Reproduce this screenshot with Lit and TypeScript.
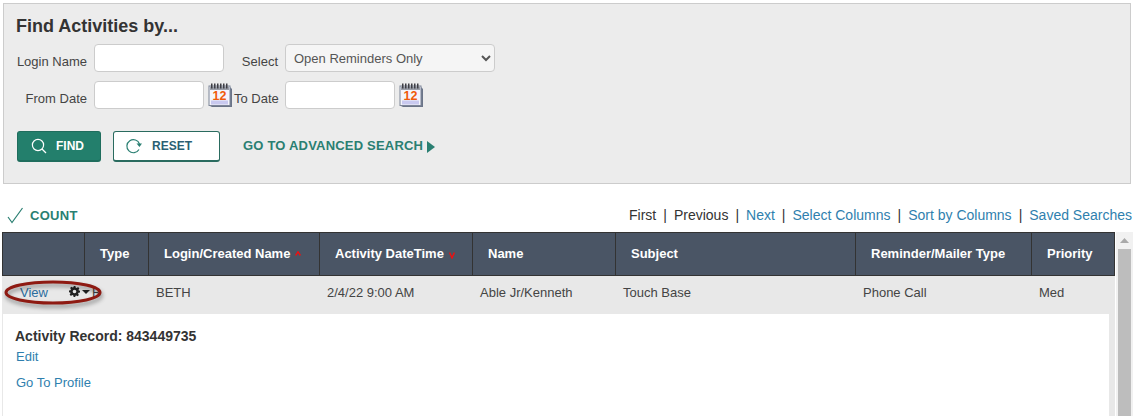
import { LitElement, html, css, svg } from "lit";
import { customElement } from "lit/decorators.js";

const calendar = html`<svg class="cal" width="24" height="24" viewBox="0 0 24 24">
  <path d="M3 4 H22 L24 6 V24 H4 L2 23 Z" fill="#6b7488"/>
  <rect x="1" y="3" width="21" height="19.5" fill="#f4f4fb" stroke="#7d8598"/>
  <rect x="2" y="3.5" width="19" height="3.5" fill="#9a9ea8"/>
  ${[3, 6, 9, 12, 15, 18].map((x) => svg`<rect x="${x}" y="0.5" width="1.5" height="5" fill="#3e3e44"/>`)}
  <rect x="3" y="17.5" width="17" height="4" fill="#c9c9ef"/>
  <text x="11.5" y="17" text-anchor="middle" font-family="Liberation Sans" font-weight="700" font-size="12.5" fill="#f05a0a">12</text>
</svg>`;

const cols = [82, 64, 171, 153, 143, 240, 176, 84];

@customElement("app-root")
export class AppRoot extends LitElement {
  static styles = css`
    :host { display: block; width: 1134px; height: 416px; overflow: hidden; background: #fff;
      font-family: "Liberation Sans", Arial, sans-serif; font-size: 13px; color: #333; }
    * { box-sizing: border-box; }
    a { color: #2f7fae; text-decoration: none; cursor: pointer; }
    .page { padding: 3px 3px 0 3px; }
    .panel { width: 1128px; height: 181px; background: #ececec; border: 1px solid #ccc; padding: 11px 12px 0; }
    h1 { margin: 0; font-size: 18px; line-height: 22px; font-weight: 700; color: #333; }
    .row { display: flex; align-items: center; height: 28px; gap: 7px; }
    .row1 { margin-top: 7px; }
    .row2 { margin-top: 9px; }
    label { display: block; text-align: right; padding-top: 6px; flex: none; color: #444; white-space: nowrap; }
    .l1 { width: 71px; }
    .l2 { width: 40px; margin-left: 7px; }
    .l3 { width: 44px; margin-left: -5px; }
    input { height: 28px; border: 1px solid #ccc; border-radius: 4px; background: #fff; padding: 0 8px; flex: none; outline: none; }
    .w130 { width: 130px; }
    .w110 { width: 110px; }
    select { width: 210px; height: 28px; flex: none; border: 1px solid #ccc; border-radius: 4px; background: #f5f5f5;
      color: #555; font: 13px "Liberation Sans", Arial, sans-serif; padding: 0 4px; }
    .dated { display: flex; align-items: center; gap: 4px; flex: none; }
    .cal { display: block; flex: none; }
    .actions { display: flex; align-items: center; margin-top: 22px; margin-left: 1px; }
    .btn { height: 31px; border-radius: 3px; display: flex; align-items: center; font-size: 12px; font-weight: 700; flex: none; }
    .find { width: 84px; background: #237f6c; border: 1px solid #1f6d5d; border-bottom-width: 2px; color: #fff; padding-left: 13px; gap: 9px; }
    .reset { width: 107px; background: #fff; border: 1px solid #2a6b5f; border-bottom-width: 2px; color: #2b5f73; margin-left: 12px; padding-left: 12px; gap: 9px; }
    .adv { margin-left: 23px; display: flex; align-items: center; gap: 4px; color: #2a7f72; font-size: 13px; font-weight: 700; letter-spacing: 0.2px; margin-top: -3px; }
    .adv svg { margin-top: 3px; }
    .bar { display: flex; align-items: center; justify-content: space-between; height: 22px; margin-top: 20px; margin-left: 4px; margin-right: -1px; }
    .count { display: flex; align-items: center; gap: 6px; color: #2a7f72; font-size: 13px; font-weight: 700; letter-spacing: 0.3px; }
    .pager { display: flex; gap: 7px; color: #333; font-size: 14px; }
    .grid { display: flex; margin-top: 6px; margin-left: -1px; }
    .main { width: 1113px; flex: none; position: relative; }
    table { border-collapse: separate; border-spacing: 0; table-layout: fixed; width: 1113px; }
    th { background: #4a5565; color: #fff; font-size: 13px; font-weight: 700; text-align: left; height: 44px; padding: 0 0 2px 15px;
      border-top: 1px solid #333; border-bottom: 1px solid #333; border-left: 1px solid #333; white-space: nowrap; }
    th:last-child { border-right: 1px solid #333; }
    td { background: #e8e8e8; height: 38px; padding: 0 0 6px 8px; white-space: nowrap; color: #444; }
    td.act { padding-left: 18px; position: relative; }
    td.act a { color: #2b6d9e; }
    .sort { display: inline-block; margin-left: 1px; vertical-align: 2px; }
    .gear { position: absolute; left: 67px; top: 10px; display: flex; align-items: center; gap: 2px; }
    .ellipse { position: absolute; left: 2px; top: 48px; width: 98px; height: 26px; pointer-events: none; overflow: visible; filter: drop-shadow(1px 3px 2px rgba(0,0,0,.4)); }
    .detail { background: #e8e8e8; padding: 0 6px 0 1px; height: 102px; }
    .inner { background: #fff; height: 102px; padding: 14px 12px 0; }
    .rec { font-weight: 700; font-size: 14px; line-height: 16px; color: #333; }
    .inner a { display: block; line-height: 16px; margin-left: 1px; font-size: 13px; }
    .edit { margin-top: 5px; }
    .prof { margin-top: 10px; }
    .scroll { width: 17px; flex: none; margin-left: 1px; background: #f1f1f1; padding: 0 2px; height: 184px; }
    .up { height: 17px; display: flex; align-items: center; justify-content: center; }
    .thumb { height: 167px; background: #bdbdbd; }
  `;

  render() {
    return html`<div class="page">
      <section class="panel">
        <h1>Find Activities by...</h1>
        <div class="row row1">
          <label class="l1">Login Name</label><input class="w130" type="text" />
          <label class="l2">Select</label>
          <select><option>Open Reminders Only</option></select>
        </div>
        <div class="row row2">
          <label class="l1">From Date</label>
          <div class="dated"><input class="w110" type="text" />${calendar}</div>
          <label class="l3">To Date</label>
          <div class="dated"><input class="w110" type="text" />${calendar}</div>
        </div>
        <div class="actions">
          <div class="btn find">
            <svg width="16" height="16" viewBox="0 0 16 16" fill="none" stroke="#fff" stroke-width="1.2"><circle cx="7" cy="7" r="5.6"/><path d="M11 11 L15 15"/></svg>
            FIND
          </div>
          <div class="btn reset">
            <svg width="17" height="16" viewBox="0 0 17 16" fill="none" stroke="#2a7f72" stroke-width="1.2"><path d="M13.5 6 A6.5 6.5 0 1 0 13 11.5"/><path d="M10.5 5.5 L16 5.5 L13.5 9 Z" fill="#2a7f72" stroke="none"/></svg>
            RESET
          </div>
          <a class="adv">GO TO ADVANCED SEARCH
            <svg width="8" height="12" viewBox="0 0 8 12"><path d="M0 0 L8 6 L0 12 Z" fill="#2a7f72"/></svg></a>
        </div>
      </section>
      <div class="bar">
        <div class="count">
          <svg width="17" height="17" viewBox="0 0 17 17" fill="none" stroke="#2a7f72" stroke-width="1.2"><path d="M1 10 L5 15.5 L15.5 1"/></svg>
          COUNT
        </div>
        <div class="pager">
          <span>First</span><span>|</span><span>Previous</span><span>|</span><a>Next</a><span>|</span>
          <a>Select Columns</a><span>|</span><a>Sort by Columns</a><span>|</span><a>Saved Searches</a>
        </div>
      </div>
      <div class="grid">
        <div class="main">
          <table>
            <colgroup>${cols.map((w) => html`<col style="width:${w}px" />`)}</colgroup>
            <thead><tr>
              <th></th><th>Type</th>
              <th>Login/Created Name <svg class="sort" width="6" height="5" viewBox="0 0 6 5"><path d="M0.6 4.5 L3 0.8 L5.4 4.5" fill="none" stroke="#f01010" stroke-width="1.4"/></svg></th>
              <th>Activity DateTime <svg class="sort" style="vertical-align:-1px;margin-left:2px" width="6" height="7" viewBox="0 0 6 7"><path d="M0.6 0.5 L3 6 L5.4 0.5" fill="none" stroke="#f01010" stroke-width="1.4"/></svg></th>
              <th>Name</th><th>Subject</th><th>Reminder/Mailer Type</th><th>Priority</th>
            </tr></thead>
            <tbody><tr>
              <td class="act"><a>View</a>
                <span class="gear">
                  <svg width="11" height="11" viewBox="0 0 12 12"><path fill="#222" fill-rule="evenodd" d="M5 0h2l.3 1.6 1.2.5L9.9 1.2l1.4 1.4-.9 1.4.5 1.2L12 5v2l-1.6.3-.5 1.2.9 1.4-1.4 1.4-1.4-.9-1.2.5L7 12H5l-.3-1.6-1.2-.5-1.4.9L.7 9.4l.9-1.4-.5-1.2L0 7V5l1.6-.3.5-1.2-.9-1.4L2.6.7l1.4.9 1.2-.5ZM6 4a2 2 0 1 0 0 4 2 2 0 0 0 0-4Z"/></svg>
                  <svg width="8" height="4" viewBox="0 0 8 4"><path d="M0 0 H8 L4 4 Z" fill="#222"/></svg>
                </span>
              </td>
              <td>B</td><td>BETH</td><td>2/4/22 9:00 AM</td><td>Able Jr/Kenneth</td><td>Touch Base</td><td>Phone Call</td><td>Med</td>
            </tr></tbody>
          </table>
          <div class="detail"><div class="inner">
            <div class="rec">Activity Record: 843449735</div>
            <a class="edit">Edit</a>
            <a class="prof">Go To Profile</a>
          </div></div>
          <svg class="ellipse" viewBox="0 0 98 26">
            <ellipse cx="49" cy="12.5" rx="47" ry="10.5" fill="none" stroke="#8e1a12" stroke-width="3"/>
          </svg>
        </div>
        <div class="scroll">
          <div class="up"><svg width="9" height="5" viewBox="0 0 9 5"><path d="M0 5 L4.5 0 L9 5 Z" fill="#a9a9a9"/></svg></div>
          <div class="thumb"></div>
        </div>
      </div>
    </div>`;
  }
}
